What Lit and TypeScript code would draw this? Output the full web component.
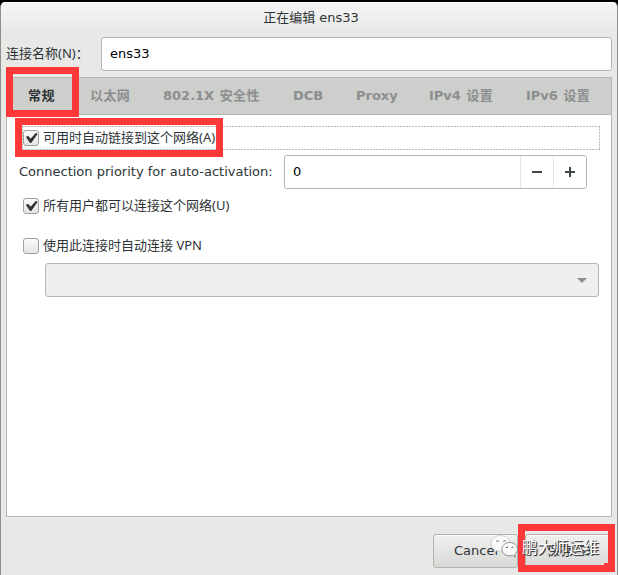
import { LitElement, html, css } from "lit";
import { customElement, property } from "lit/decorators.js";
import { classMap } from "lit/directives/class-map.js";

@customElement("gtk-check")
export class GtkCheck extends LitElement {
  @property({ type: Boolean }) checked = false;
  @property({ type: Boolean }) focused = false;

  static styles = css`
    :host { display: block; }
    .row {
      box-sizing: border-box;
      display: flex;
      align-items: center;
      gap: 4px;
      height: 24px;
      padding: 0 1px;
      color: #2e3436;
      font: 13px/22px "Noto Sans", "Noto Sans CJK SC", sans-serif;
      white-space: nowrap;
    }
    .focused {
      background:
        repeating-linear-gradient(90deg, #bdbdbd 0 2px, #f4f4f4 2px 3px) top / 100% 1px no-repeat,
        repeating-linear-gradient(90deg, #bdbdbd 0 2px, #f4f4f4 2px 3px) bottom / 100% 1px no-repeat,
        repeating-linear-gradient(#bdbdbd 0 2px, #f4f4f4 2px 3px) left / 1px 100% no-repeat,
        repeating-linear-gradient(#bdbdbd 0 2px, #f4f4f4 2px 3px) right / 1px 100% no-repeat;
    }
    .box {
      box-sizing: border-box;
      flex: none;
      width: 16px;
      height: 16px;
      border: 1px solid #a0a09c;
      border-radius: 3px;
      background: linear-gradient(#fbfbfb, #e4e4e2);
    }
    .text { padding-bottom: 2px; }
    svg { display: block; width: 14px; height: 14px; }
  `;

  render() {
    return html`<div class=${classMap({ row: true, focused: this.focused })}>
      <span class="box">${this.checked
        ? html`<svg viewBox="0 0 14 14">
            <path d="M1.8 5.8 L4.4 5 L6.6 7.8 L12 1.8 L13.6 3 L7.2 12 L6 12 Z" fill="#2e3436" />
          </svg>`
        : ""}</span>
      <span class="text"><slot></slot></span>
    </div>`;
  }
}

@customElement("app-root")
export class AppRoot extends LitElement {
  tabs = [
    ["", "常规"],
    ["", "以太网"],
    ["802.1X ", "安全性"],
    ["DCB", ""],
    ["Proxy", ""],
    ["IPv4 ", "设置"],
    ["IPv6 ", "设置"],
  ];

  static styles = css`
    :host {
      display: block;
      position: relative;
      height: 575px;
      overflow: hidden;
      background: #000;
      font: 13px/20px "DejaVu Sans", "Noto Sans CJK SC", sans-serif;
      color: #2e3436;
    }
    * { box-sizing: border-box; }
    .window {
      display: flex;
      flex-direction: column;
      height: 573px;
      margin-top: 2px;
      padding: 0 5px;
      border: 1px solid #8f8f8d;
      border-top: 1px solid #fff;
      border-bottom: 0;
      border-radius: 5px 5px 0 0;
      background: linear-gradient(#f4f4f4, #e8e8e7 32px);
    }
    .title {
      height: 34px;
      line-height: 29px;
      text-align: center;
      padding-left: 4px;
      white-space: pre;
    }
    .name-row { display: flex; height: 34px; align-items: center; }
    .name-label {
      width: 95px;
      padding-bottom: 2px;
      font-family: "Noto Sans", "Noto Sans CJK SC", sans-serif;
      white-space: nowrap;
    }
    .entry {
      flex: 1;
      height: 34px;
      padding: 0 8px;
      line-height: 32px;
      color: #000;
      background: #fff;
      border: 1px solid #b6b6b3;
      border-radius: 3px;
    }
    .notebook {
      height: 440px;
      margin-top: 6px;
      border: 1px solid #b6b6b3;
      background: #fff;
    }
    .tabs {
      display: grid;
      grid-template-columns: 62px 73px 130px 63px 73px 97px auto;
      height: 37px;
      padding-left: 21px;
      border-bottom: 1px solid #b6b6b3;
      background: #cececc;
      font-weight: bold;
      line-height: 36px;
      color: #8b8e8f;
      white-space: pre;
      word-spacing: 1px;
    }
    .han { letter-spacing: 0.4px; }
    .active { color: #2e3436; }
    .page { padding: 11px 11px 0 15px; }
    .priority {
      display: flex;
      align-items: center;
      height: 34px;
      margin: 5px 0 0 -3px;
      white-space: nowrap;
    }
    .priority-label { width: 265px; }
    .spin {
      display: flex;
      width: 303px;
      height: 34px;
      color: #000;
      line-height: 32px;
      border: 1px solid #b6b6b3;
      border-radius: 3px;
    }
    .value { flex: 1; padding-left: 8px; }
    .step {
      display: grid;
      place-items: center;
      width: 33px;
      border-left: 1px solid #e5e5e4;
    }
    .step svg { width: 10px; height: 10px; }
    .all-users { margin-top: 5px; }
    .vpn { margin-top: 16px; }
    .combo {
      display: flex;
      align-items: center;
      justify-content: flex-end;
      height: 34px;
      margin: 5px 1px 0 23px;
      padding-right: 11px;
      background: #efefef;
      border: 1px solid #b6b6b3;
      border-radius: 3px;
    }
    .combo svg { width: 10px; height: 5px; }
    .actions { display: flex; justify-content: flex-end; gap: 7px; margin-top: 17px; }
    .button {
      width: 85px;
      height: 34px;
      padding-left: 1px;
      line-height: 32px;
      text-align: center;
      border: 1px solid #b0b0ad;
      border-radius: 3px;
      background: linear-gradient(#f0f0ef, #d8d8d6);
      box-shadow: inset 0 1px #fafafa;
    }
    .save { width: 87px; }
    .mark { position: absolute; border: 7px solid #fd3838; }
    .mark-tab { left: 6px; top: 67px; width: 73px; height: 50px; }
    .mark-auto { left: 15px; top: 118px; width: 208px; height: 39px; }
    .mark-save { left: 518px; top: 524px; width: 97px; height: 48px; }
    .mark-save::after {
      content: "";
      position: absolute;
      right: 0;
      bottom: 0;
      width: 4px;
      height: 2px;
      background: #fd3838;
    }
    .watermark {
      position: absolute;
      left: 490px;
      top: 533px;
      display: flex;
      align-items: center;
      height: 28px;
      gap: 4px;
      color: #fff;
      font: 15.4px/28px "Noto Sans CJK SC", sans-serif;
      text-shadow: 1px 1px 0 #444, 1px 1px 1px #333;
      white-space: nowrap;
    }
    .watermark svg { width: 28px; height: 26px; }
    .watermark span { padding-bottom: 2px; }
  `;

  render() {
    return html`
      <div class="window">
        <div class="title">正在编辑 ens33</div>
        <div class="name-row">
          <span class="name-label">连接名称(N)：</span>
          <div class="entry">ens33</div>
        </div>
        <div class="notebook">
          <div class="tabs">
            ${this.tabs.map(
              ([latin, han], i) =>
                html`<span class=${classMap({ active: i === 0 })}>${latin}<span class="han">${han}</span></span>`
            )}
          </div>
          <div class="page">
            <gtk-check checked focused>可用时自动链接到这个网络(A)</gtk-check>
            <div class="priority">
              <span class="priority-label">Connection priority for auto-activation:</span>
              <div class="spin">
                <span class="value">0</span>
                <span class="step"><svg viewBox="0 0 10 10"><path d="M0 4h10v2H0z" fill="#3f4446" /></svg></span>
                <span class="step"><svg viewBox="0 0 10 10"><path d="M0 4h4V0h2v4h4v2H6v4H4V6H0z" fill="#3f4446" /></svg></span>
              </div>
            </div>
            <gtk-check class="all-users" checked>所有用户都可以连接这个网络(U)</gtk-check>
            <gtk-check class="vpn">使用此连接时自动连接 VPN</gtk-check>
            <div class="combo"><svg viewBox="0 0 10 5"><path d="M0 0h10L5 5z" fill="#8b8e8f" /></svg></div>
          </div>
        </div>
        <div class="actions">
          <div class="button">Cancel</div>
          <div class="button save">保存(S)</div>
        </div>
      </div>
      <div class="mark mark-tab"></div>
      <div class="mark mark-auto"></div>
      <div class="mark mark-save"></div>
      <div class="watermark">
        <svg viewBox="0 0 28 26">
          <path
            d="M10.500 1.500C5.200 1.500 1.200 5 1.200 9.300c0 2.500 1.300 4.600 3.400 6l-.8 3 3.300-1.800c1.100.3 2.200.5 3.400.5 5.300 0 9.500-3.400 9.500-7.700S15.800 1.500 10.500 1.500z"
            fill="#fafafa" stroke="#bdbdbb" stroke-width=".6"
          />
          <path
            d="M19.700 8.500c-4.400 0-7.800 2.900-7.800 6.600s3.400 6.700 7.800 6.700c1 0 1.900-.1 2.700-.4l2.900 1.700-.7-2.700c1.800-1.200 2.900-3.100 2.900-5.300 0-3.700-3.400-6.600-7.800-6.600z"
            fill="#fafafa" stroke="#777" stroke-width=".8"
          />
          <path d="M6.300 7.400q1.200-1.500 2.400 0M13.300 7.400q1.200-1.500 2.400 0M16 13.700q1-1.400 2 0M21.500 13.700q1-1.400 2 0" fill="none" stroke="#555" stroke-width="1" />
        </svg>
        <span>鹏大师运维</span>
      </div>
    `;
  }
}
